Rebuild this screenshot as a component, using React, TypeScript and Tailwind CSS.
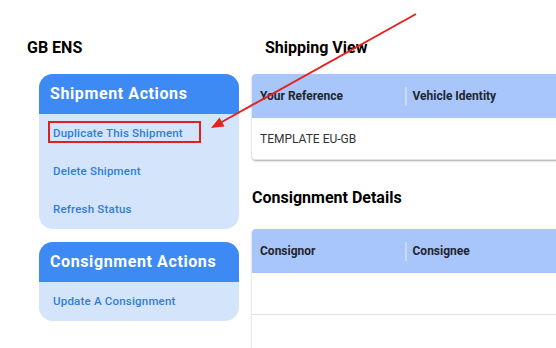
import React from 'react'

const shipmentActions = ['Duplicate This Shipment', 'Delete Shipment', 'Refresh Status']
const consignmentActions = ['Update A Consignment']

function ActionCard({ title, items, className }: { title: string; items: string[]; className?: string }) {
  return (
    <div className={`w-[200px] rounded-[14px] overflow-hidden bg-[#d4e4fb] ${className ?? ''}`}>
      <div className="h-[40px] bg-[#3d8af4] flex items-center pl-[11px] text-white text-[16px] font-bold tracking-[0.6px]">
        {title}
      </div>
      <div className="flex flex-col">
        {items.map(item => (
          <div key={item} className="h-[38.4px] flex items-center pl-[14px] text-[11.5px] font-medium tracking-[0.2px] text-[#2f7ed8]">
            {item}
          </div>
        ))}
      </div>
    </div>
  )
}

function Table({ cols, rows, className }: { cols: string[]; rows: string[][]; className?: string }) {
  return (
    <div className={`w-[320px] rounded-[4px] bg-white shadow-[0_1px_2px_rgba(0,0,0,0.35)] overflow-hidden ${className ?? ''}`}>
      <div className="h-[44px] bg-[#a8c6fa] flex items-center text-[12px] font-bold text-[#1f2530]">
        <div className="w-[153px] pl-[8px]">{cols[0]}</div>
        <div className="h-[19px] w-[1.5px] bg-[#c9d9f5]" />
        <div className="pl-[6px]">{cols[1]}</div>
      </div>
      {rows.map((r, i) => (
        <div key={i} className="h-[42px] flex items-center border-b border-[#e2e2e2] text-[12px] text-[#333]">
          <div className="w-[153px] pl-[8px]">{r[0]}</div>
          <div className="pl-[8px]">{r[1]}</div>
        </div>
      ))}
    </div>
  )
}

export default function App() {
  return (
    <div className="relative w-[556px] h-[348px] overflow-hidden bg-white font-['Roboto',sans-serif]">
      <div className="flex">
        <div className="w-[252px] flex-shrink-0 pl-[27px] pt-[38px]">
          <h1 className="text-[16px] font-bold text-black leading-[20px]">GB ENS</h1>
          <ActionCard title="Shipment Actions" items={shipmentActions} className="ml-[12px] mt-[16px]" />
          <ActionCard title="Consignment Actions" items={consignmentActions} className="ml-[12px] mt-[13px]" />
        </div>
        <div className="flex-1 pt-[38px]">
          <h2 className="pl-[13px] text-[16px] font-bold text-black leading-[20px]">Shipping View</h2>
          <Table cols={['Your Reference', 'Vehicle Identity']} rows={[['TEMPLATE EU-GB', '']]} className="mt-[16px]" />
          <h2 className="mt-[28px] text-[16px] font-bold text-black leading-[20px]">Consignment Details</h2>
          <Table cols={['Consignor', 'Consignee']} rows={[['', ''], ['', '']]} className="mt-[21px]" />
        </div>
      </div>

      {/* annotation overlay */}
      <div className="absolute left-[48px] top-[121px] w-[153px] h-[22px] border-2 border-[#e0201f]" />
      <svg className="absolute inset-0 pointer-events-none" width="556" height="348">
        <line x1="416" y1="14" x2="220" y2="123" stroke="#e32222" strokeWidth="2" />
        <polygon points="211,128 224.5,126.5 219.5,117.5" fill="#e32222" />
      </svg>
    </div>
  )
}
